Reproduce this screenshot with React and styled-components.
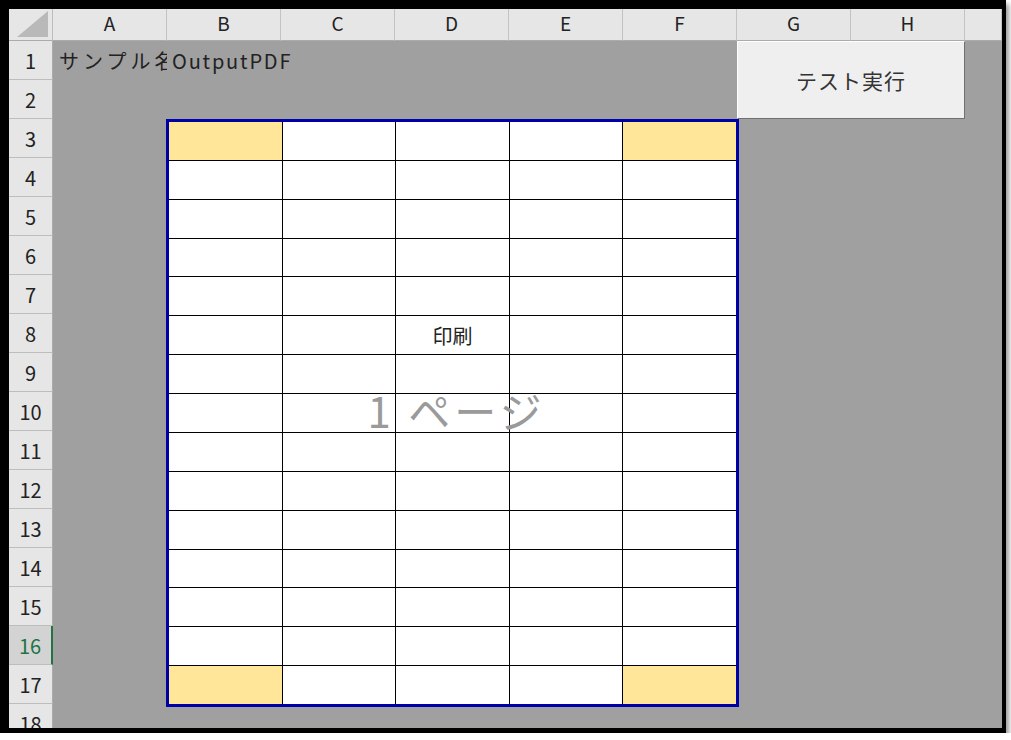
import React from 'react'
import styled, { createGlobalStyle } from 'styled-components'

const GlobalStyle = createGlobalStyle`
    body{
        margin: 0;
        background: #fff;
        font-family: "Noto Sans CJK JP", "Noto Sans", sans-serif;
    }
`;

const COLS = ['A', 'B', 'C', 'D', 'E', 'F', 'G', 'H', '']
const ROWS = Array.from({ length: 18 }, (_, i) => i + 1)
const SELECTED_ROW = 16

// print area B3:F17 -> 15 rows x 5 cols, yellow corners
const PRINT_ROWS = 15
const PRINT_COLS = 5

function isCorner(r, c) {
    return (r === 0 || r === PRINT_ROWS - 1) && (c === 0 || c === PRINT_COLS - 1)
}

function App() {
    return (
        <>
            <GlobalStyle />
            <Frame>
                <Sheet>
                    <Corner><span /></Corner>
                    {COLS.map((c, i) => (
                        <ColHeader key={'c' + i} $col={i + 2}>{c}</ColHeader>
                    ))}
                    {ROWS.map(r => (
                        <RowHeader key={'r' + r} $row={r + 1} $selected={r === SELECTED_ROW}>{r}</RowHeader>
                    ))}
                    <CellText $col={2} $row={2} $clip>サンプル名</CellText>
                    <CellText $col={3} $row={2}>OutputPDF</CellText>
                    <Button>テスト実行</Button>
                    <PrintArea>
                        {Array.from({ length: PRINT_ROWS }).map((_, r) =>
                            Array.from({ length: PRINT_COLS }).map((_, c) => (
                                <PrintCell key={r + '-' + c} $fill={isCorner(r, c)}>
                                    {r === 5 && c === 2 ? '印刷' : ''}
                                </PrintCell>
                            ))
                        )}
                        <PageMark>1 ページ</PageMark>
                    </PrintArea>
                </Sheet>
            </Frame>
        </>
    )
}

const Frame = styled.div`
    width: 1006px;
    height: 733px;
    box-sizing: border-box;
    border-style: solid;
    border-color: #000;
    border-width: 9px 4px 5px 9px;
    box-shadow: 3px 4px 5px rgba(0, 0, 0, 0.4);
    background: #a0a0a0;
    overflow: hidden;
`;

const Sheet = styled.div`
    display: grid;
    grid-template-columns: 44px repeat(8, 114px) 1fr;
    grid-template-rows: 32px repeat(18, 39px);
    font-family: "Noto Sans CJK JP", "Noto Sans", sans-serif;
    color: #222;
`;

const Corner = styled.div`
    grid-column: 1;
    grid-row: 1;
    background: #e6e6e6;
    border-right: 1px solid #bdbdbd;
    border-bottom: 1px solid #ababab;
    position: relative;
    span{
        position: absolute;
        right: 4px;
        bottom: 3px;
        width: 31px;
        height: 26px;
        background: #b9b9b9;
        clip-path: polygon(100% 0, 100% 100%, 0 100%);
    }
`;

const ColHeader = styled.div`
    grid-column: ${p => p.$col};
    grid-row: 1;
    background: #e6e6e6;
    border-right: 1px solid #c3c3c3;
    border-bottom: 1px solid #ababab;
    display: flex;
    align-items: center;
    justify-content: center;
    font-size: 19px;
    padding-bottom: 4px;
    box-sizing: border-box;
`;

const RowHeader = styled.div`
    grid-column: 1;
    grid-row: ${p => p.$row};
    background: ${p => p.$selected ? '#d3d3d3' : '#e6e6e6'};
    color: ${p => p.$selected ? '#217346' : '#222'};
    border-bottom: 1px solid #bdbdbd;
    border-right: ${p => p.$selected ? '2px solid #217346' : '1px solid #ababab'};
    display: flex;
    align-items: center;
    justify-content: center;
    font-size: 20px;
    box-sizing: border-box;
`;

/* A1 is cut at the B boundary, B1 spills into empty C1 like Excel does */
const CellText = styled.div`
    grid-column: ${p => p.$col};
    grid-row: ${p => p.$row};
    display: flex;
    align-items: center;
    padding: 0 0 0 ${p => p.$clip ? 6 : 5}px;
    font-size: 20px;
    letter-spacing: ${p => p.$clip ? 4 : 1.8}px;
    white-space: nowrap;
    overflow: ${p => p.$clip ? 'hidden' : 'visible'};
    color: #222;
`;

const Button = styled.div`
    grid-column: 8 / 10;
    grid-row: 2 / 4;
    background: #efefef;
    border-left: 1px solid #fff;
    border-top: 1px solid #fff;
    border-right: 1px solid #707070;
    border-bottom: 1px solid #707070;
    display: flex;
    align-items: center;
    justify-content: center;
    font-size: 21px;
    letter-spacing: 1px;
    color: #333;
`;

const PrintArea = styled.div`
    grid-column: 3 / 8;
    grid-row: 4 / 19;
    margin: 0 -2px -3px -1px;
    position: relative;
    display: grid;
    grid-template-columns: repeat(${PRINT_COLS}, 1fr);
    grid-template-rows: repeat(${PRINT_ROWS}, 1fr);
    gap: 1px;
    background: #000;
    border: 3px solid #0000a8;
`;

const PrintCell = styled.div`
    background: ${p => p.$fill ? '#ffe699' : '#fff'};
    display: flex;
    align-items: center;
    justify-content: center;
    font-size: 20px;
    color: #222;
`;

const PageMark = styled.div`
    position: absolute;
    left: 8px;
    right: 0;
    top: 50%;
    transform: translateY(-50%);
    text-align: center;
    font-family: "Noto Sans CJK JP", "Noto Sans", sans-serif;
    font-size: 42px;
    letter-spacing: 4px;
    color: #9a9a9a;
    pointer-events: none;
    margin-top: -4px;
`;

export default App
